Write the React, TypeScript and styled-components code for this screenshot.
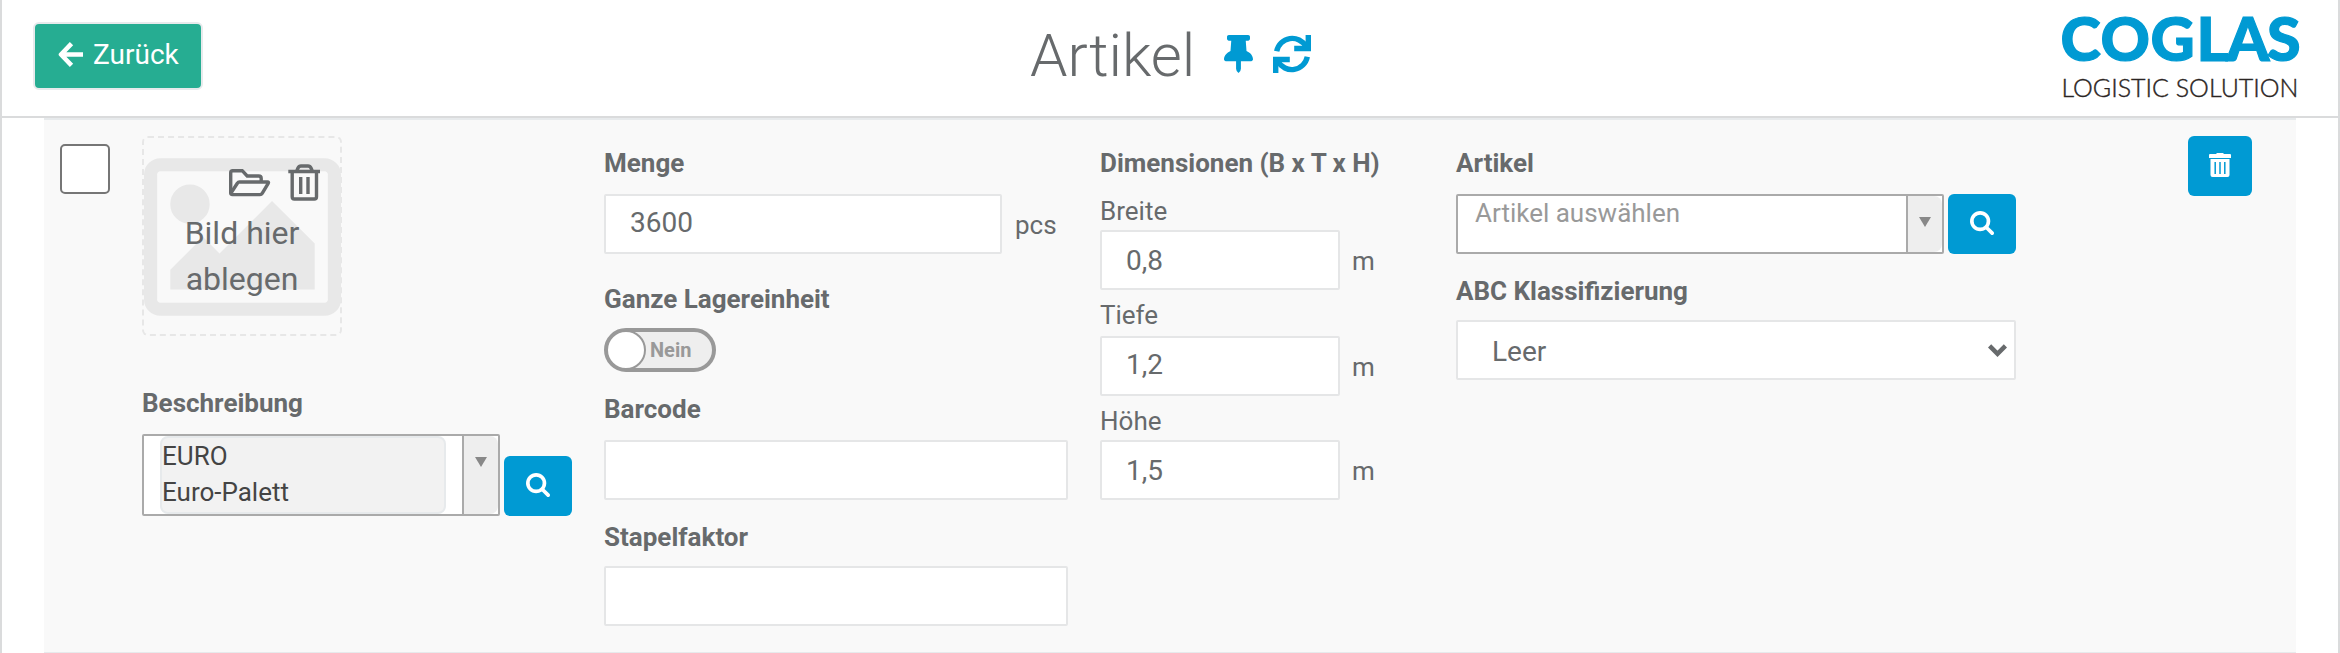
import React from "react";
import styled, { createGlobalStyle } from "styled-components";

const Global = createGlobalStyle`
  * { box-sizing: border-box; }
  body { margin: 0; background: #fff; font-family: Roboto, "Liberation Sans", sans-serif; font-size: 26px; color: #676a6c; }
`;

const Page = styled.div`
  height: 653px;
  overflow: hidden;
  border-left: 2px solid #dadbdc;
  border-right: 2px solid #dadbdc;
  display: flex;
  flex-direction: column;
`;

const Header = styled.header`
  height: 118px;
  flex: none;
  display: grid;
  grid-template-columns: 1028px 1fr 240px;
  padding-right: 36px;
  border-bottom: 2px solid #dadbdc;
`;

const BackButton = styled.button`
  width: 170px;
  height: 68px;
  margin: 22px 0 0 31px;
  padding: 0 0 3px 23px;
  display: flex;
  align-items: center;
  gap: 10px;
  border: 2px solid #e7eaec;
  border-radius: 6px;
  background: #26ad92;
  color: #fff;
  font: 400 28px Roboto, sans-serif;
`;

const TitleBar = styled.div`
  display: flex;
  align-items: flex-start;
`;

const Title = styled.h1`
  margin: 20px 0 0;
  width: 194px;
  font-size: 60px;
  line-height: 71px;
  font-weight: 300;
`;

const HeadIcon = styled.svg<{ $w: number; $gap?: number }>`
  width: ${(p) => p.$w}px;
  height: 38px;
  margin: 35px ${(p) => p.$gap ?? 0}px 0 0;
  fill: #009ad3;
`;

const Logo = styled.svg`
  width: 240px;
  height: 104px;
  margin-top: 8px;
  overflow: visible;
`;

const Panel = styled.main`
  height: 535px;
  margin: 0 42px;
  display: flex;
  background: #f9f9f9;
  border-top: 2px solid #e7eaec;
  border-bottom: 1px solid #e7eaec;
`;

const Column = styled.section<{ $w: number; $ml?: number; $pt?: number }>`
  flex: none;
  width: ${(p) => p.$w}px;
  margin-left: ${(p) => p.$ml ?? 0}px;
  padding-top: ${(p) => p.$pt ?? 0}px;
`;

const Checkbox = styled.div`
  width: 50px;
  height: 50px;
  border: 2px solid #767676;
  border-radius: 5px;
  background: #fff;
`;

const DropZone = styled.div`
  position: relative;
  width: 200px;
  height: 200px;
  border: 2px dashed #e7e7e7;
  border-radius: 6px;
  display: flex;
  justify-content: center;
`;

const Placeholder = styled.svg`
  position: absolute;
  left: 0;
  top: 7px;
  width: 197px;
  height: 184px;
  fill: #e8e8e8;
`;

const DropTools = styled.svg`
  position: absolute;
  left: 82px;
  top: 24px;
  width: 98px;
  height: 42px;
  fill: none;
  stroke: #676a6c;
`;

const DropText = styled.div`
  position: relative;
  margin-top: 72px;
  width: 140px;
  text-align: center;
  font-size: 32px;
  line-height: 46px;
`;

const Label = styled.label<{ $mt?: number; $light?: boolean }>`
  display: block;
  height: 30px;
  line-height: 32px;
  margin-top: ${(p) => p.$mt ?? 0}px;
  font-weight: ${(p) => (p.$light ? 400 : 700)};
  white-space: nowrap;
`;

const Row = styled.div<{ $mt?: number; $gap?: number }>`
  display: flex;
  align-items: flex-end;
  gap: ${(p) => p.$gap ?? 4}px;
  margin-top: ${(p) => p.$mt ?? 0}px;
`;

const Field = styled.div<{ $w: number; $up?: number }>`
  width: ${(p) => p.$w}px;
  height: 60px;
  padding: 1px 0 ${(p) => p.$up ?? 0}px 24px;
  display: flex;
  align-items: center;
  border: 2px solid #e5e6e7;
  border-radius: 2px;
  background: #fff;
  font-size: 28px;
`;

const Unit = styled.span`
  line-height: 30px;
  padding-bottom: 14px;
`;

const Combo = styled.div<{ $w: number; $h: number }>`
  width: ${(p) => p.$w}px;
  height: ${(p) => p.$h}px;
  display: flex;
  border: 2px solid #aaa;
  border-radius: 2px;
  background: #fff;
`;

const ComboHint = styled.div`
  flex: 1;
  padding-left: 17px;
  line-height: 34px;
  color: #999;
`;

const ComboChip = styled.div`
  width: 286px;
  margin: 0 auto 0 16px;
  border: 2px solid #e7eaec;
  border-radius: 8px;
  background: #f2f2f2;
  color: #444;
  line-height: 36px;
`;

const ComboArrow = styled.div`
  width: 36px;
  padding: 21px 0 0 11px;
  border-left: 2px solid #aaa;
  border-radius: 0 8px 8px 0;
  background: #eee;
  &::before {
    content: "";
    display: block;
    width: 0;
    border: 6px solid transparent;
    border-top: 10px solid #888;
    border-bottom: 0;
  }
`;

const BlueButton = styled.button<{ $w?: number }>`
  width: ${(p) => p.$w ?? 68}px;
  height: 60px;
  padding: 0 0 2px;
  display: flex;
  align-items: center;
  justify-content: center;
  border: 0;
  border-radius: 6px;
  background: #009ad3;
`;

const Toggle = styled.div`
  width: 112px;
  height: 44px;
  margin-top: 15px;
  display: flex;
  align-items: center;
  border: 4px solid #999;
  border-radius: 22px;
  background: #eee;
  color: #999;
  font-size: 20px;
  font-weight: 700;
  line-height: 34px;
`;

const Knob = styled.span`
  width: 40px;
  height: 40px;
  margin: 0 4px 0 -2px;
  border: 2px solid #999;
  border-radius: 20px;
  background: #fff;
`;

const SelectBox = styled(Field)`
  padding: 3px 7px 0 34px;
  justify-content: space-between;
  margin-top: 15px;
`;

const SearchIcon = () => (
  <svg width="24" height="24" viewBox="0 0 1664 1664" fill="#fff">
    <path d="M1152 704q0-185-131.500-316.500t-316.500-131.500-316.500 131.500-131.500 316.500 131.500 316.500 316.500 131.500 316.500-131.500 131.500-316.500zM1664 1536q0 52-38 90t-90 38q-54 0-90-38l-343-342q-179 124-399 124-143 0-273.500-55.500t-225-150-150-225-55.500-273.500 55.500-273.500 150-225 225-150 273.500-55.500 273.500 55.500 225 150 150 225 55.500 273.500q0 220-124 399l343 343q37 37 37 90z" />
  </svg>
);

const dimensions = [
  { name: "Breite", value: "0,8", mt: 18, gap: 5, up: 0 },
  { name: "Tiefe", value: "1,2", mt: 9, gap: 7, up: 4 },
  { name: "Höhe", value: "1,5", mt: 9, gap: 5, up: 0 },
];

export default function App() {
  return (
    <Page>
      <Global />
      <Header>
        <div>
          <BackButton>
            <svg width="25" height="25" viewBox="0 0 25 25" fill="none" stroke="#fff" strokeWidth="4.6">
              <path d="M13.500 1.600L3 12.500l10.500 10.900M3.500 12.500H25" strokeLinejoin="round" />
            </svg>
            Zurück
          </BackButton>
        </div>
        <TitleBar>
          <Title>Artikel</Title>
          <HeadIcon $w={29} $gap={20} viewBox="0 0 384 512" preserveAspectRatio="none">
            <path d="M298 214l-10-138h32c13 0 24-11 24-24V24c0-13-11-24-24-24H64C51 0 40 11 40 24v28c0 13 11 24 24 24h32L86 214C37 236 0 276 0 328c0 13 11 24 24 24h136v104l8 28 24 28 24-28 8-28V352h136c13 0 24-11 24-24 0-52-38-93-86-114z" />
          </HeadIcon>
          <HeadIcon $w={38} viewBox="0 0 38 38">
            <g fill="none" stroke="#009ad3" strokeWidth="5.400">
              <path d="M3.700 16.200A15.800 15.800 0 0 1 33 11.500" />
              <path d="M21.200 13.500H35.300V0" />
              <path d="M34.300 21.800A15.800 15.800 0 0 1 5 26.500" />
              <path d="M16.800 24.500H2.700V38" />
            </g>
          </HeadIcon>
        </TitleBar>
        <Logo viewBox="0 0 240 104">
          <text x="-1.500 38.500 88.500 134.500 164.500 205" y="53.300" fill="#009ad3" stroke="#009ad3" strokeWidth="1.200" fontFamily="Lato" fontWeight="900" fontSize="61">COGLAS</text>
          <text x="-0.500" y="89" fill="#2b2523" stroke="#2b2523" strokeWidth="0.400" fontFamily="Lato" fontWeight="300" fontSize="25" textLength="237" lengthAdjust="spacingAndGlyphs">LOGISTIC SOLUTION</text>
        </Logo>
      </Header>
      <Panel>
        <Column $w={50} $ml={16} $pt={24}>
          <Checkbox />
        </Column>
        <Column $w={430} $ml={32} $pt={16}>
          <DropZone>
            <Placeholder viewBox="0 0 1920 1792">
              <path d="M640 576q0 80-56 136t-136 56-136-56-56-136 56-136 136-56 136 56 56 136zm1024 384v448h-1408v-192l320-320 160 160 512-512zm96-704h-1600q-13 0-22.500 9.500t-9.500 22.500v1216q0 13 9.500 22.500t22.500 9.500h1600q13 0 22.500-9.500t9.500-22.500v-1216q0-13-9.500-22.500t-22.500-9.500zm160 32v1216q0 66-47 113t-113 47h-1600q-66 0-113-47t-47-113v-1216q0-66 47-113t113-47h1600q66 0 113 47t47 113z" />
            </Placeholder>
            <DropText>Bild hier ablegen</DropText>
            <DropTools viewBox="0 0 98 42" strokeWidth="3.400">
              <path d="M4.700 31V10.700q0-2 2-2h9.500l5 5.300h11.500q2.500 0 2.500 2.500v3.500" />
              <path d="M5 31l6.500-10q.6-1 2-1h28q1.500 0 .7 1.300l-6 10q-.8 1.300-2.200 1.300H6.500q-2 0-1.800-2" />
              <path d="M62.300 9.500H94M66.200 10v24.800q0 2.200 2.200 2.200h19.900q2.200 0 2.200-2.200V10M70.500 9.500l1.500-3.500q.9-2 3-2h7q2.100 0 3 2l1.500 3.500M74.700 15v17M82 15v17" />
            </DropTools>
          </DropZone>
          <Label $mt={51}>Beschreibung</Label>
          <Row $mt={17}>
            <Combo $w={358} $h={82}>
              <ComboChip>
                EURO
                <br />
                Euro-Palett
              </ComboChip>
              <ComboArrow />
            </Combo>
            <BlueButton><SearchIcon /></BlueButton>
          </Row>
        </Column>
        <Column $w={464} $ml={32} $pt={27}>
          <Label>Menge</Label>
          <Row $mt={17} $gap={13}>
            <Field $w={398} $up={4}>3600</Field>
            <Unit>pcs</Unit>
          </Row>
          <Label $mt={29}>Ganze Lagereinheit</Label>
          <Toggle>
            <Knob />
            Nein
          </Toggle>
          <Label $mt={21}>Barcode</Label>
          <Row $mt={17}><Field $w={464} /></Row>
          <Label $mt={21}>Stapelfaktor</Label>
          <Row $mt={15}><Field $w={464} /></Row>
        </Column>
        <Column $w={300} $ml={32} $pt={27}>
          <Label>Dimensionen (B x T x H)</Label>
          {dimensions.map((d) => (
            <div key={d.name}>
              <Label $light $mt={d.mt}>{d.name}</Label>
              <Row $mt={d.gap} $gap={12}>
                <Field $w={240} $up={d.up}>{d.value}</Field>
                <Unit>m</Unit>
              </Row>
            </div>
          ))}
        </Column>
        <Column $w={560} $ml={56} $pt={27}>
          <Label>Artikel</Label>
          <Row $mt={17}>
            <Combo $w={488} $h={60}>
              <ComboHint>Artikel auswählen</ComboHint>
              <ComboArrow />
            </Combo>
            <BlueButton><SearchIcon /></BlueButton>
          </Row>
          <Label $mt={21}>ABC Klassifizierung</Label>
          <SelectBox $w={560}>
            Leer
            <svg width="19" height="16" viewBox="0 0 19 16" fill="none" stroke="#676a6c" strokeWidth="4.500">
              <path d="M1.600 1.800l7.900 8 7.900-8" />
            </svg>
          </SelectBox>
        </Column>
        <Column $w={64} $ml={172} $pt={16}>
          <BlueButton $w={64}>
            <svg width="22" height="24" viewBox="0 0 22 24">
              <path fill="#fff" d="M0 2q0-1 1-1h6l1-1h6l1 1h6q1 0 1 1v3H0zM1.500 6h19v16q0 2-2 2h-15q-2 0-2-2z" />
              <path stroke="#009ad3" strokeWidth="1.500" d="M6.200 9v12M11 9v12M15.800 9v12" />
            </svg>
          </BlueButton>
        </Column>
      </Panel>
    </Page>
  );
}
